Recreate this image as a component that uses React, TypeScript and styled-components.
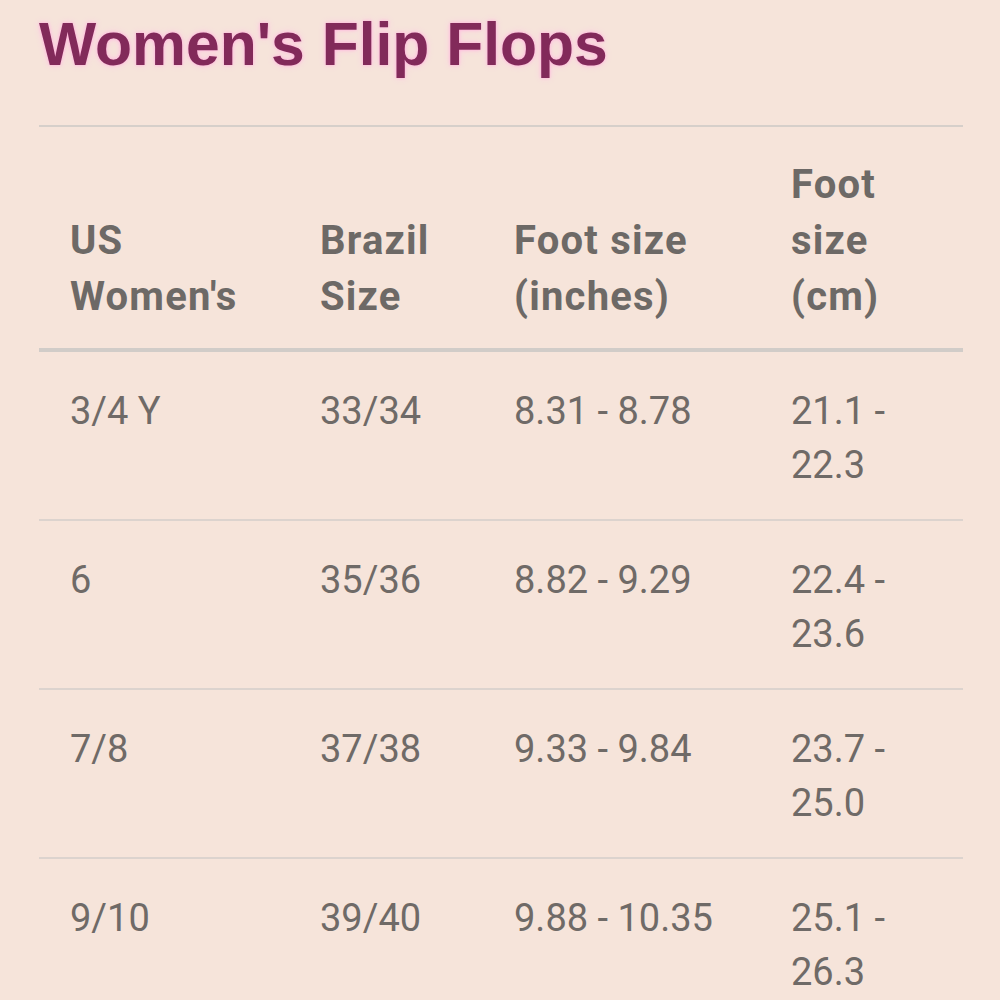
import React from "react";
import styled, { createGlobalStyle } from "styled-components";

const GlobalStyle = createGlobalStyle`
  html, body {
    margin: 0;
    padding: 0;
    background: #f6e4da;
  }
`

const Page = styled.div`
  padding: 14px 37px 0 39px;
  font-family: Roboto, "Noto Sans", sans-serif;
  color: #6f6a67;
`

const Title = styled.h1`
  margin: 0 0 51px 0;
  font-family: "Liberation Sans", Arial, sans-serif;
  font-weight: 700;
  font-size: 60.6px;
  line-height: 60px;
  color: #822a5a;
  text-shadow: 0 0 3px #ffb0da, 0 0 7px #ffc8e4;
`

const Table = styled.table`
  width: 924px;
  border-collapse: collapse;
  table-layout: fixed;
  border-top: 2px solid #d6cfca;
`

const HeadCell = styled.th`
  text-align: left;
  vertical-align: bottom;
  padding: 30px 16px 23px 31px;
  font-size: 40px;
  font-weight: 700;
  line-height: 56px;
  letter-spacing: 1.2px;
  color: #6d6966;
  border-bottom: 4px solid #d1ccc8;
`

const Cell = styled.td`
  vertical-align: top;
  padding: 32px 16px 27px 31px;
  font-size: 38px;
  font-weight: 400;
  line-height: 54px;
  color: #6f6a67;
  border-bottom: 2px solid #dcd3ce;
`

type Row = [string, string, string, string];

const rows: Row[] = [
  ["3/4 Y", "33/34", "8.31 - 8.78", "21.1 - 22.3"],
  ["6", "35/36", "8.82 - 9.29", "22.4 - 23.6"],
  ["7/8", "37/38", "9.33 - 9.84", "23.7 - 25.0"],
  ["9/10", "39/40", "9.88 - 10.35", "25.1 - 26.3"],
];

const widths = [250, 194, 277, 203];

export default function App(): React.JSX.Element {
  return (
    <>
      <GlobalStyle />
      <Page>
        <Title>Women's Flip Flops</Title>
        <Table>
          <colgroup>
            {widths.map((w, i) => (
              <col key={i} style={{ width: w }} />
            ))}
          </colgroup>
          <thead>
            <tr>
              <HeadCell>US Women's</HeadCell>
              <HeadCell>Brazil Size</HeadCell>
              <HeadCell>Foot size (inches)</HeadCell>
              <HeadCell>Foot size (cm)</HeadCell>
            </tr>
          </thead>
          <tbody>
            {rows.map((r) => (
              <tr key={r[0]}>
                {r.map((v, i) => (
                  <Cell key={i}>{v}</Cell>
                ))}
              </tr>
            ))}
          </tbody>
        </Table>
      </Page>
    </>
  );
}
